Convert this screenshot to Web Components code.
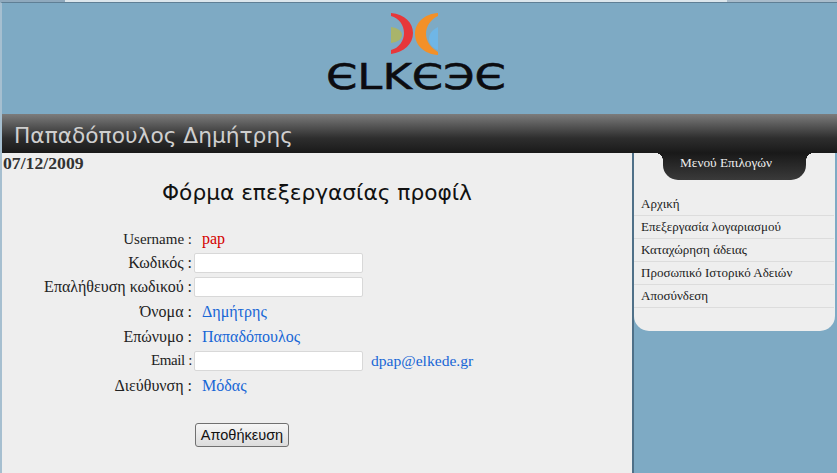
<!DOCTYPE html>
<html lang="el"><head><meta charset="utf-8"><title>Φόρμα επεξεργασίας προφίλ</title>
<style>html,body{margin:0;padding:0;height:473px;overflow:hidden;background:#7eaac4}</style></head>
<body>
<app-page>
  <site-header name="Παπαδόπουλος Δημήτρης"></site-header>
  <div style="display:flex">
    <profile-form date="07/12/2009"></profile-form>
    <side-menu title="Μενού Επιλογών"></side-menu>
  </div>
</app-page>
<script>
function def(name, css, html){
  customElements.define(name, class extends HTMLElement{
    connectedCallback(){
      if(this.shadowRoot) return;
      const r=this.attachShadow({mode:'open'});
      r.innerHTML='<style>'+css+'</style>'+(typeof html==='function'?html(this):html);
    }
  });
}
def('app-page',`:host{display:block;width:837px;height:473px;overflow:hidden;font-family:"Liberation Serif",serif}
.strip{display:flex;height:2px}.a{width:65px;background:#8fa9bd}.b{flex:1;background:#dce6ec}.c{width:110px;background:#a9bccb}`,
`<div class="strip"><div class="a"></div><div class="b"></div><div class="c"></div></div><slot></slot>`);

def('elkede-logo',`:host{display:block;width:190px;height:96px}svg{display:block}text{font-family:"DejaVu Sans",sans-serif;fill:#0c0c10;stroke:#0c0c10;stroke-width:.5}`,
`<svg width="190" height="96" viewBox="0 0 190 96" role="img" aria-label="ELKEDE">
  <path d="M68 10 C82 11 90 20 90 30 C90 41 81 49 68 51 L68 47 C76 45 81 38 81 30 C81 22 76 15 68 13Z" fill="#e8373a"/>
  <path d="M68 24 C75 25 79 28 79 32 C79 36 75 39 68 40Z" fill="#a9b46a"/>
  <path d="M115 10 C101 11 92 20 92 31 C92 42 101 51 115 52 L115 49 C108 45 103 38 103 31 C103 23 108 16 115 13Z" fill="#f39028"/>
  <path d="M115 24 C109 27 106 31 106 36 C106 41 110 45 115 47Z" fill="#6fb6e6"/>
  <text x="93" y="86" text-anchor="middle" font-size="36" textLength="180" lengthAdjust="spacingAndGlyphs">ЄLKЄЭЄ</text>
</svg>`);

def('site-header',`:host{display:block}
.top{height:112px;background:#7eaac4;border-top:1px solid #5f7f95;border-left:2px solid #a6bfd0;box-sizing:border-box;display:flex;justify-content:center}
.logo{margin-left:-4px}
.bar{height:39px;box-sizing:border-box;padding:6px 0 0 12px;background:linear-gradient(#7c7c7c 0,#565656 30%,#2e2e2e 62%,#191919 100%);color:#cfcfcf;font:21.73px/32px "DejaVu Sans",sans-serif;border-left:2px solid #a6bfd0}`,
h=>`<div class="top"><elkede-logo class="logo"></elkede-logo></div><div class="bar">${h.getAttribute('name')}</div>`);

def('form-row',`:host{display:grid;grid-template-columns:190px auto auto;column-gap:2px;justify-content:start;align-items:center;height:var(--h,24px);font-size:16px;color:#222}
.l{text-align:right;white-space:nowrap;font-size:var(--ls,16px);letter-spacing:var(--lt,0)}
.v{color:#1766d6;padding-left:8px}
input{box-sizing:border-box;width:169px;height:20px;border:1px solid #d8d8d8;background:#fff;margin:0;display:block;border-radius:2px}
.after{color:#1766d6;padding-left:6px;font-size:15.6px}`,
h=>{const t=h.getAttribute('type');const red=h.hasAttribute('red')?' style="color:#d40000"':'';
 return `<div class="l">${h.getAttribute('label')} :</div>`+
 (t==='input'?`<input type="text" aria-label="${h.getAttribute('label')}">`+(h.getAttribute('value')?`<div class="after">${h.getAttribute('value')}</div>`:''):`<div class="v"${red}>${h.getAttribute('value')}</div>`)});

def('profile-form',`:host{display:block;width:630px;height:320px;background:#eee;border-left:2px solid #a6bfd0;flex:none}
.d{font:bold 17.7px/20px "Liberation Serif",serif;color:#333;padding-left:1px;height:20px}
h1{margin:-1px 0 0 0;font:normal 21.7px/30px "DejaVu Sans",sans-serif;color:#111;text-align:center;width:630px;padding-top:6px;box-sizing:border-box;height:55px}
button{margin:24px 0 0 193px;width:94px;height:24px;padding:0;font:14.5px "Liberation Sans",sans-serif;color:#111;border:1px solid #707070;border-radius:3px;background:linear-gradient(#f6f6f6,#dcdcdc);display:block}
`,
h=>`<div class="d">${h.getAttribute('date')}</div><h1>Φόρμα επεξεργασίας προφίλ</h1>
<div class="rows">
<form-row label="Username" value="pap" red style="--ls:15px"></form-row>
<form-row label="Κωδικός" type="input"></form-row>
<form-row label="Επαλήθευση κωδικού" type="input"></form-row>
<form-row label="Όνομα" value="Δημήτρης" style="--h:25px"></form-row>
<form-row label="Επώνυμο" value="Παπαδόπουλος" style="--h:25px"></form-row>
<form-row label="Email" type="input" value="dpap@elkede.gr" style="--h:23px;--ls:15px;--lt:-.4px"></form-row>
<form-row label="Διεύθυνση" value="Μόδας" style="--h:27px"></form-row>
</div><button type="button">Αποθήκευση</button>`);

def('side-menu',`:host{display:block;width:205px;flex:none;box-sizing:border-box;border-left:2px solid #4f7088;height:320px;background:#7eaac4}
.panel{width:201px;height:178px;background:#eee;border-radius:0 0 15px 15px;position:relative}
.tab{position:absolute;left:29px;top:0;width:143px;height:27px;box-sizing:border-box;padding-left:17px;background:linear-gradient(#191919,#3a3a3a);border-radius:0 0 15px 15px;color:#eee;font-size:13.3px;line-height:19px}
.tab:before,.tab:after{content:"";position:absolute;top:0;width:7px;height:8px}
.tab:before{left:-7px;background:radial-gradient(ellipse 7px 8px at 0 100%,transparent 97%,#191919 100%)}
.tab:after{right:-7px;background:radial-gradient(ellipse 7px 8px at 100% 100%,transparent 97%,#191919 100%)}
ul{list-style:none;margin:0;padding:40px 0 0 0}
li{height:23px;box-sizing:border-box;border-bottom:1px solid #dcdcdc;padding-left:7px;font-size:13px;line-height:21px;color:#222;margin-right:1px}`,
h=>`<div class="panel"><div class="tab">${h.getAttribute('title')}</div><ul>
<li>Αρχική</li><li>Επεξεργασία λογαριασμού</li><li>Καταχώρηση άδειας</li><li>Προσωπικό Ιστορικό Αδειών</li><li>Αποσύνδεση</li></ul></div>`);
</script>
</body></html>
